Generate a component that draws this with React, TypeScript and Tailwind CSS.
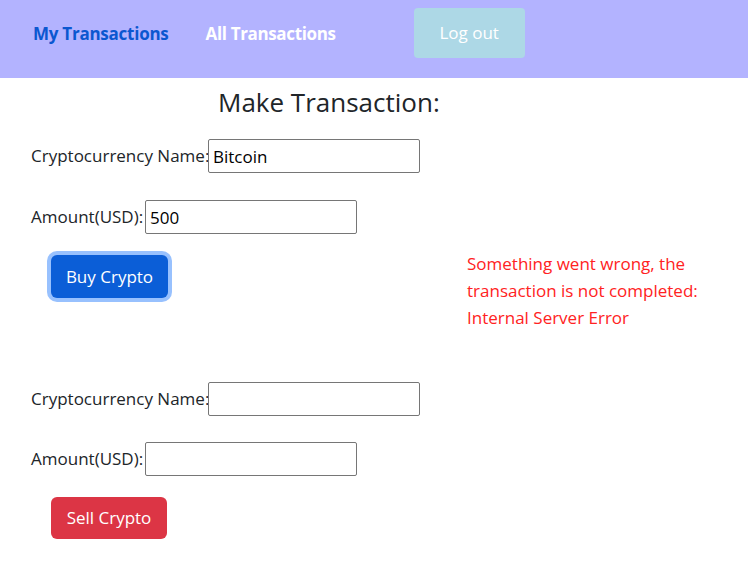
import React from "react"

function Field({ label, value, labelW }: { label: string; value?: string; labelW: string }) {
  return (
    <div className="flex items-center pl-[31px]">
      <span className={`${labelW} whitespace-nowrap text-[17px] text-[#212529]`}>{label}</span>
      <input
        readOnly
        value={value ?? ""}
        className="h-[34px] w-[212px] border border-[#767676] rounded-[2px] px-[4px] text-[17px] text-black outline-none"
      />
    </div>
  )
}

export default function App() {
  return (
    <div className="min-h-screen bg-white" style={{ fontFamily: '"Open Sans", "Noto Sans", sans-serif' }}>
      {/* Nav bar */}
      <header className="flex h-[78px] items-start bg-[#b3b3ff] pt-[8px]">
        <div className="flex h-[52px] items-center pl-[33px]">
          <a className="font-bold text-[17px] tracking-[-0.25px] text-[#0b57d0]">My Transactions</a>
          <a className="ml-[37px] font-bold text-[17px] tracking-[-0.35px] text-white">All Transactions</a>
        </div>
        <button className="ml-[78px] h-[50px] w-[111px] rounded-[4px] bg-[#add8e6] text-[17px] text-white">
          Log out
        </button>
      </header>

      <main>
        <h2 className="pt-[7px] pl-[218px] font-medium text-[26px] leading-[34px] text-[#212529]">
          Make Transaction:
        </h2>

        {/* Buy form */}
        <div className="mt-[20px] flex flex-col gap-[27px]">
          <Field label="Cryptocurrency Name:" value="Bitcoin" labelW="w-[177px]" />
          <Field label="Amount(USD):" value="500" labelW="w-[114px]" />
        </div>
        <div className="mt-[21px] flex items-start">
          <button className="ml-[51px] h-[43px] w-[117px] rounded-[6px] bg-[#0b5ed7] text-[17px] text-white ring-[4px] ring-[#98c1fe]">
            Buy Crypto
          </button>
          <p className="ml-[299px] mt-[-5px] w-[260px] text-[17px] leading-[27px] text-[#ff2222]">
            Something went wrong, the transaction is not completed: Internal Server Error
          </p>
        </div>

        {/* Sell form */}
        <div className="mt-[51px] flex flex-col gap-[26px]">
          <Field label="Cryptocurrency Name:" labelW="w-[177px]" />
          <Field label="Amount(USD):" labelW="w-[114px]" />
        </div>
        <div className="mt-[21px] flex">
          <button className="ml-[51px] h-[42px] w-[116px] rounded-[6px] bg-[#dc3545] text-[17px] text-white">
            Sell Crypto
          </button>
        </div>
      </main>
    </div>
  )
}
